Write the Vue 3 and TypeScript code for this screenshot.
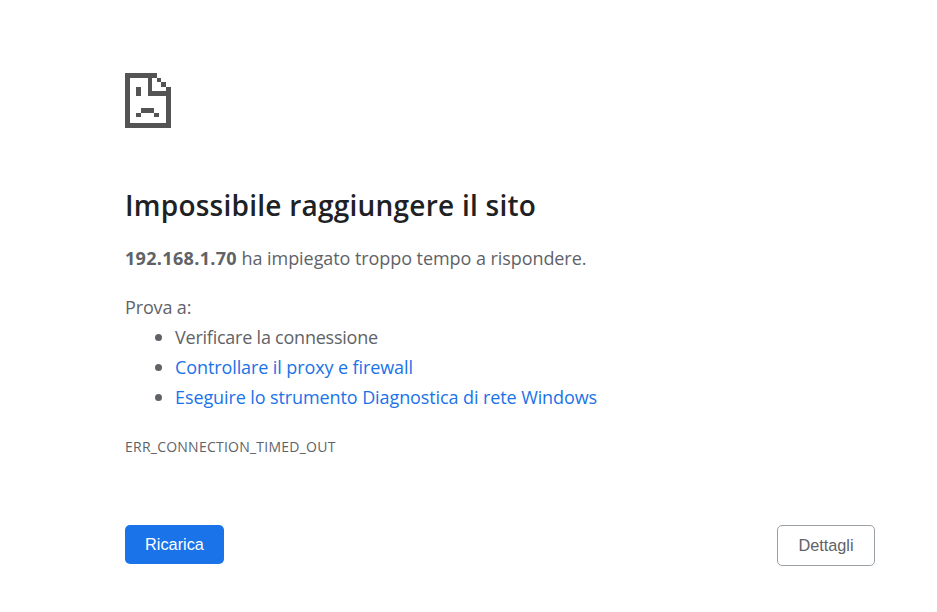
<script setup lang="ts">
const steps: string[] = ['Verificare la connessione']
const links: string[] = ['Controllare il proxy e firewall', 'Eseguire lo strumento Diagnostica di rete Windows']
</script>

<template>
  <main class="page">
    <svg class="icon" width="46" height="55" viewBox="0 0 46 55" aria-hidden="true">
      <path fill="#545454" d="M0 0H32V5H27V18H41V23H23V5H5V50H41V18H46V55H0Z" />
      <path fill="#545454" d="M32 5H36V9H32ZM36 9H41V14H36ZM41 14H46V18H41Z" />
      <path fill="#545454" d="M11 14H16V23H11ZM11 40H16V44H11ZM16 35H29V40H16ZM29 40H34V44H29Z" />
    </svg>
    <h1 class="title">Impossibile raggiungere il sito</h1>
    <p class="summary"><strong>192.168.1.70</strong> ha impiegato troppo tempo a rispondere.</p>
    <p class="try">Prova a:</p>
    <ul class="list">
      <li v-for="s in steps" :key="s" class="item">{{ s }}</li>
      <li v-for="l in links" :key="l" class="item"><a href="#" class="link">{{ l }}</a></li>
    </ul>
    <div class="code">ERR_CONNECTION_TIMED_OUT</div>
    <div class="actions">
      <button class="btn primary">Ricarica</button>
      <button class="btn secondary">Dettagli</button>
    </div>
  </main>
</template>

<style>
html, body { background: #fff; margin: 0; }
</style>

<style scoped>
.page {
  box-sizing: border-box;
  width: 937px;
  height: 612px;
  padding: 73px 62px 0 125px;
  font-family: "Open Sans", "Noto Sans", sans-serif;
  color: #5f6368;
  font-size: 18px;
  overflow: hidden;
}
.icon { display: block; }
.title {
  margin: 59px 0 0;
  font-size: 28px;
  line-height: 36px;
  font-weight: 600;
  letter-spacing: 0.24px;
  color: #202124;
}
.summary { margin: 20px 0 0; line-height: 30px; letter-spacing: -0.07px; }
.summary strong { font-weight: 700; letter-spacing: 0.33px; }
.try { margin: 19px 0 0; line-height: 30px; letter-spacing: -0.15px; }
.list { margin: 0; padding: 0 0 0 30px; list-style: none; line-height: 30px; letter-spacing: -0.1px; }
.item { display: flex; align-items: center; gap: 13px; }
.item:first-child { letter-spacing: -0.23px; }
.item::before {
  content: "";
  flex: none;
  width: 7px;
  height: 7px;
  border-radius: 50%;
  background: #5f6368;
}
.link { color: #1a73e8; text-decoration: none; }
.code { margin-top: 26px; font-size: 14px; line-height: 18px; letter-spacing: 0.24px; }
.actions { display: flex; justify-content: space-between; margin-top: 69px; }
.btn {
  box-sizing: border-box;
  font-family: "Liberation Sans", Arial, sans-serif;
  font-size: 16.3px;
  border-radius: 5px;
  padding: 0;
}
.primary { width: 99px; height: 39px; background: #1a73e8; color: #fff; border: none; }
.secondary { width: 98px; height: 41px; background: #fff; color: #5f6368; border: 1px solid #9aa0a6; }
</style>
